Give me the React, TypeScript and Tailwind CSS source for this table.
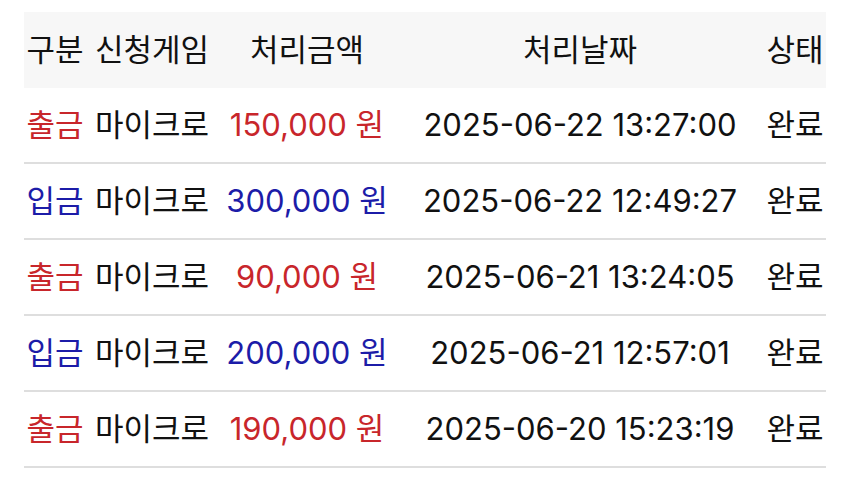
const rows = [
  { type: '출금', game: '마이크로', amount: '150,000 원', date: '2025-06-22 13:27:00', status: '완료' },
  { type: '입금', game: '마이크로', amount: '300,000 원', date: '2025-06-22 12:49:27', status: '완료' },
  { type: '출금', game: '마이크로', amount: '90,000 원', date: '2025-06-21 13:24:05', status: '완료' },
  { type: '입금', game: '마이크로', amount: '200,000 원', date: '2025-06-21 12:57:01', status: '완료' },
  { type: '출금', game: '마이크로', amount: '190,000 원', date: '2025-06-20 15:23:19', status: '완료' },
];

const cols = 'grid grid-cols-[62px_132px_178px_368px_62px] items-center text-center whitespace-nowrap';

export default function App() {
  return (
    <div
      className="w-[850px] h-[479px] bg-white pt-3 pl-6 text-[31px] text-[#111]"
      style={{ fontFamily: '"Inter", "Noto Sans CJK KR", sans-serif' }}
    >
      <div className="w-[802px]">
        <div className={`${cols} h-[76px] bg-[#f7f7f7]`}>
          <div>구분</div>
          <div>신청게임</div>
          <div>처리금액</div>
          <div>처리날짜</div>
          <div>상태</div>
        </div>
        {rows.map((r, i) => {
          const color = r.type === '출금' ? 'text-[#c8262b]' : 'text-[#1c1ca8]';
          return (
            <div key={i} className={`${cols} h-[76px] border-b-2 border-[#dedede]`}>
              <div className={color}>{r.type}</div>
              <div>{r.game}</div>
              <div className={color}>{r.amount}</div>
              <div>{r.date}</div>
              <div>{r.status}</div>
            </div>
          );
        })}
      </div>
    </div>
  );
}
